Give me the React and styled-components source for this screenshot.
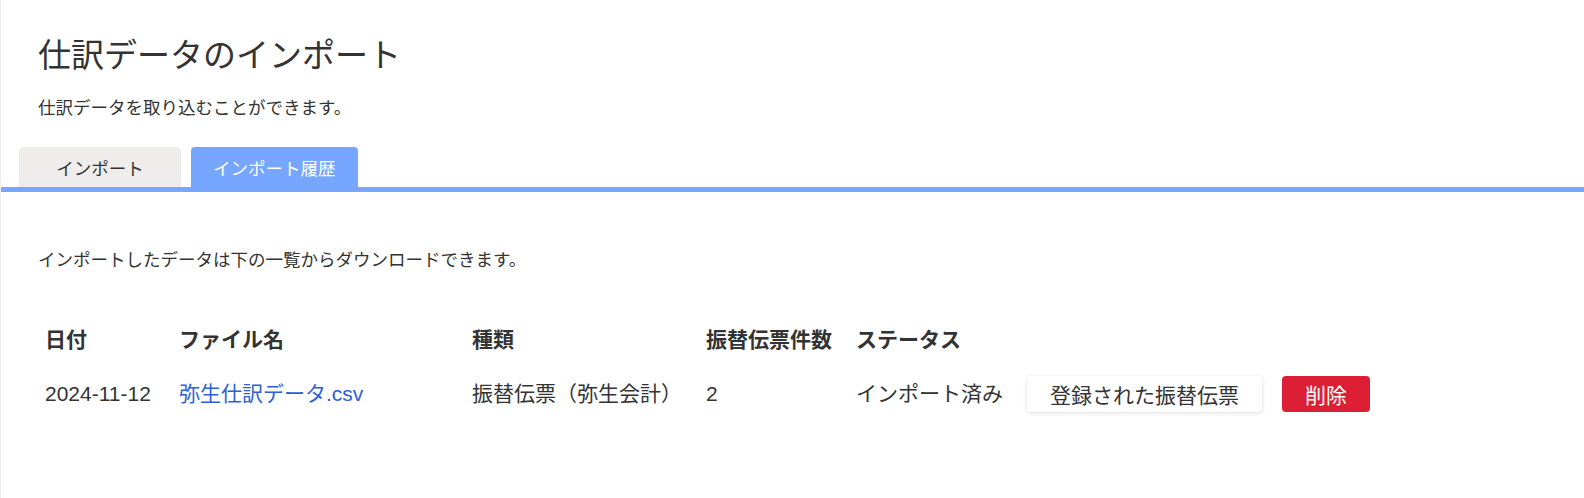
import React from 'react'
import styled, { createGlobalStyle } from 'styled-components'

const GlobalStyle = createGlobalStyle`
  body {
    margin: 0;
    background: #fff;
    font-family: "Liberation Sans", "Noto Sans CJK JP", sans-serif;
    color: #333;
  }
`

const Page = styled.div`
  min-height: 498px;
  box-sizing: border-box;
  border-left: 1px solid #ededed;
`

const Header = styled.div`
  padding: 36px 0 0 37px;
`

const Title = styled.h1`
  margin: 0;
  font-size: 33px;
  line-height: 40px;
  font-weight: 400;
`

const Lead = styled.p`
  margin: 20px 0 0;
  font-size: 17.5px;
  line-height: 24px;
`

const TabBar = styled.div`
  display: flex;
  gap: 10px;
  margin-top: 27px;
  padding-left: 18px;
  border-bottom: 5px solid #76a6fd;
`

const Tab = styled.button`
  min-width: 162px;
  height: 40px;
  padding: 0 22px;
  border: none;
  border-radius: 4px 4px 0 0;
  font-family: inherit;
  font-size: 17.5px;
  cursor: pointer;
  background: ${p => (p.$active ? '#76a6fd' : '#eeedeb')};
  color: ${p => (p.$active ? '#fff' : '#333')};
`

const Body = styled.div`
  padding: 56px 0 0 37px;
`

const Note = styled.p`
  margin: 0;
  font-size: 17.5px;
  line-height: 24px;
`

const Table = styled.table`
  margin: 54px 0 0 -5px;
  border-collapse: collapse;
  font-size: 21px;
`

const Th = styled.th`
  width: ${p => p.$w || 'auto'};
  padding: 0 12px;
  height: 28px;
  line-height: 28px;
  text-align: left;
  font-weight: 700;
  white-space: nowrap;
`

const Td = styled.td`
  padding: 22px 12px 0;
  line-height: 28px;
  vertical-align: middle;
  white-space: nowrap;
`

const FileLink = styled.a`
  color: #2d60d6;
  text-decoration: none;
`

const Button = styled.button`
  height: 36px;
  padding: 0 23px;
  border: none;
  border-radius: 4px;
  font-family: inherit;
  font-size: 21px;
  cursor: pointer;
  background: ${p => (p.$danger ? '#dc1f35' : '#fff')};
  color: ${p => (p.$danger ? '#fff' : '#333')};
  box-shadow: ${p => (p.$danger ? 'none' : '0 1px 4px rgba(0, 0, 0, 0.14)')};
  margin-left: ${p => (p.$danger ? '20px' : '0')};
`

const rows = [
  {
    date: '2024-11-12',
    file: '弥生仕訳データ.csv',
    kind: '振替伝票（弥生会計）',
    count: 2,
    status: 'インポート済み',
  },
]

export default function App() {
  return (
    <Page>
      <GlobalStyle />
      <Header>
        <Title>仕訳データのインポート</Title>
        <Lead>仕訳データを取り込むことができます。</Lead>
      </Header>

      <TabBar>
        <Tab>インポート</Tab>
        <Tab $active>インポート履歴</Tab>
      </TabBar>

      <Body>
        <Note>インポートしたデータは下の一覧からダウンロードできます。</Note>
        <Table>
          <thead>
            <tr>
              <Th $w="110px">日付</Th>
              <Th $w="269px">ファイル名</Th>
              <Th $w="210px">種類</Th>
              <Th $w="124px">振替伝票件数</Th>
              <Th>ステータス</Th>
              <Th />
            </tr>
          </thead>
          <tbody>
            {rows.map(r => (
              <tr key={r.file}>
                <Td>{r.date}</Td>
                <Td><FileLink href="#">{r.file}</FileLink></Td>
                <Td>{r.kind}</Td>
                <Td>{r.count}</Td>
                <Td>{r.status}</Td>
                <Td>
                  <Button>登録された振替伝票</Button>
                  <Button $danger>削除</Button>
                </Td>
              </tr>
            ))}
          </tbody>
        </Table>
      </Body>
    </Page>
  )
}
